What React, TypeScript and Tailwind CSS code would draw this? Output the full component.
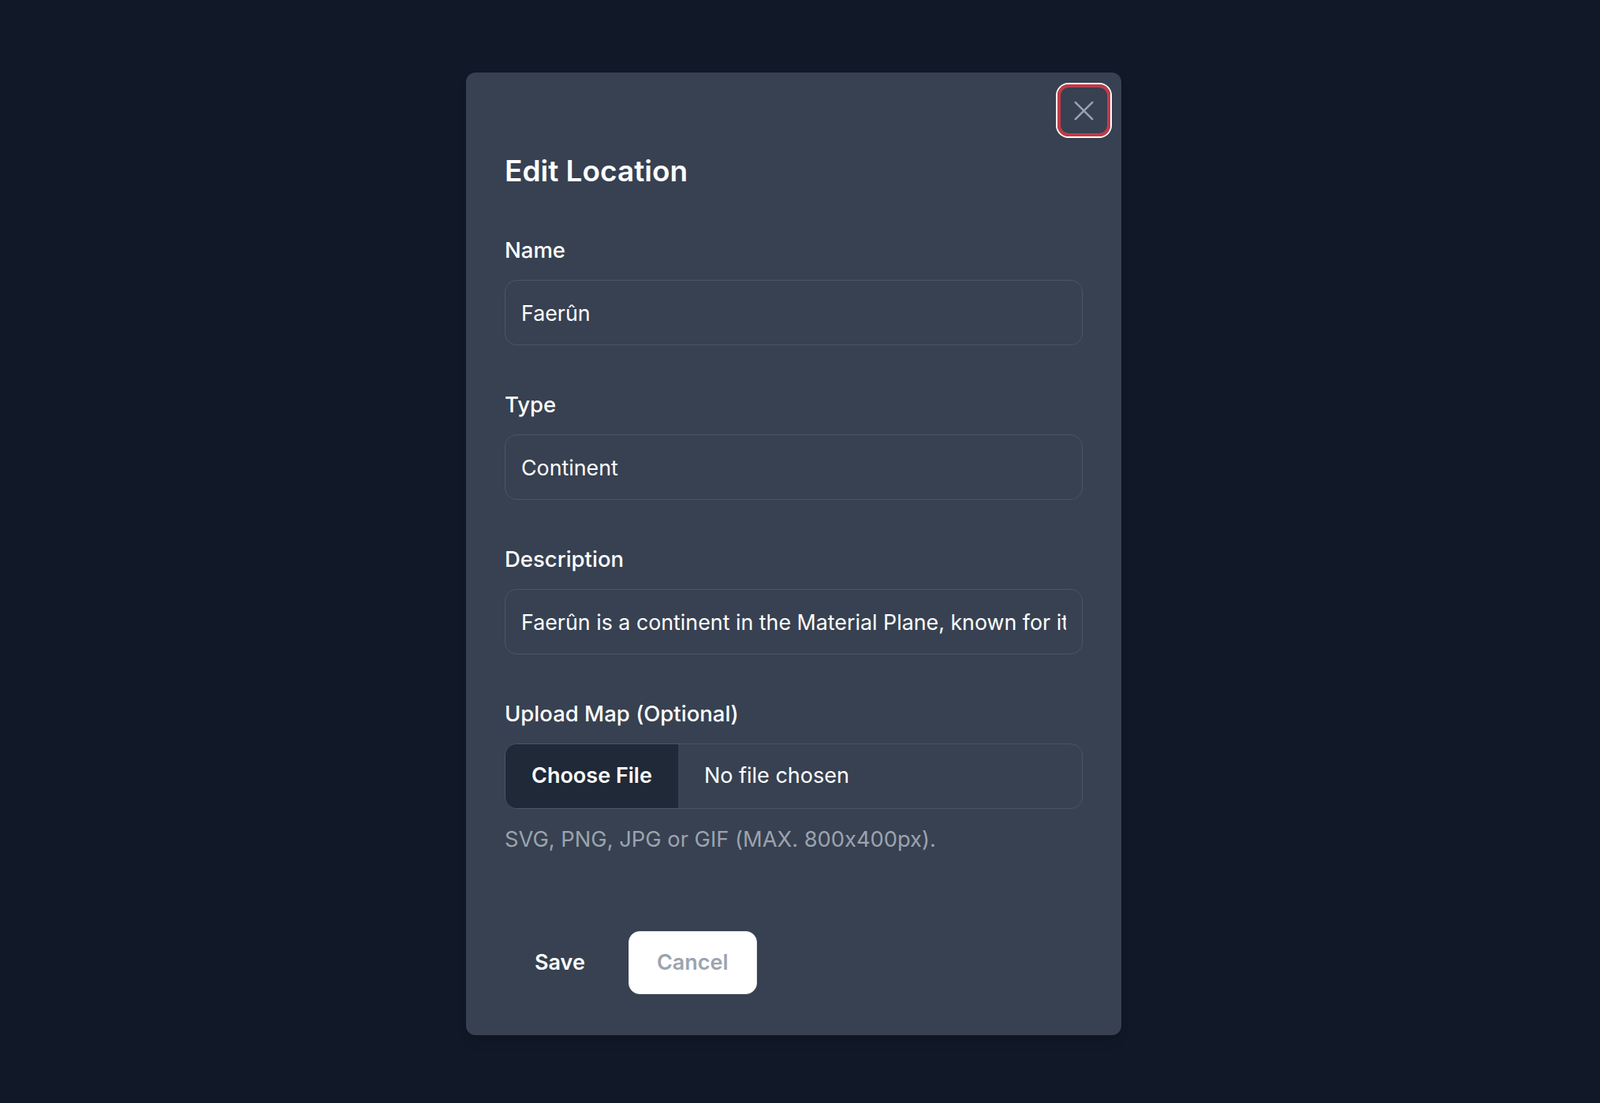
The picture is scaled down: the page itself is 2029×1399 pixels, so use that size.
const fields = [
  { id: 'name', label: 'Name', value: 'Faerûn' },
  { id: 'type', label: 'Type', value: 'Continent' },
  {
    id: 'description',
    label: 'Description',
    value:
      'Faerûn is a continent in the Material Plane, known for its diverse landscapes, kingdoms and ancient ruins.',
  },
];

export default function App() {
  return (
    <div className="min-h-screen bg-[#111827] font-['Inter','Noto_Sans',sans-serif] [font-feature-settings:'calt'_0] flex justify-center items-start pt-[92px] pr-[16px]">
      <div className="relative w-[831px] rounded-[12px] bg-[#374151] px-[49px] pt-[101px] pb-[52px] shadow-lg">
        {/* Close */}
        <button
          type="button"
          className="absolute top-[15px] right-[14px] w-[67px] h-[66px] flex items-center justify-center rounded-[14px] border-[4px] border-[#c23a48] ring-2 ring-white text-[#9ca3af]"
        >
          <svg width="25" height="25" viewBox="0 0 14 14" fill="none" stroke="currentColor" strokeWidth="1.4" strokeLinecap="round">
            <path d="M1 1l12 12M13 1L1 13" />
          </svg>
        </button>

        <h3 className="text-[37px] leading-[47px] font-semibold text-white">Edit Location</h3>

        <form className="mt-[60px] flex flex-col">
          <div className="flex flex-col gap-[58px]">
            {fields.map((f) => (
              <div key={f.id}>
                <label htmlFor={f.id} className="block text-[27.5px] leading-[34px] font-medium text-white mb-[21px]">
                  {f.label}
                </label>
                <input
                  id={f.id}
                  readOnly
                  value={f.value}
                  className="block w-full h-[83px] rounded-[15px] border-[1.5px] border-[#4b5563] bg-[#374151] px-[20px] text-[26.8px] text-white outline-none"
                />
              </div>
            ))}

            {/* Upload */}
            <div>
              <label className="block text-[27.5px] leading-[34px] font-medium text-white mb-[21px]">
                Upload Map (Optional)
              </label>
              <div className="flex h-[83px] w-full overflow-hidden rounded-[15px] border-[1.5px] border-[#4b5563] bg-[#374151] text-[27px] text-white">
                <span className="flex items-center bg-[#1f2937] px-[33px] font-semibold">Choose File</span>
                <span className="flex items-center pl-[33px]">No file chosen</span>
              </div>
              <p className="mt-[19px] text-[27.3px] leading-[39px] text-[#9ca3af]">SVG, PNG, JPG or GIF (MAX. 800x400px).</p>
            </div>
          </div>

          <div className="mt-[97px] flex items-center">
            <button type="button" className="h-[80px] px-[38px] rounded-[14px] text-[27px] font-semibold text-white">
              Save
            </button>
            <button
              type="button"
              className="ml-[17px] h-[80px] px-[35px] rounded-[14px] bg-white border border-[#e5e7eb] text-[27px] font-semibold text-[#9ca3af]"
            >
              Cancel
            </button>
          </div>
        </form>
      </div>
    </div>
  );
}
